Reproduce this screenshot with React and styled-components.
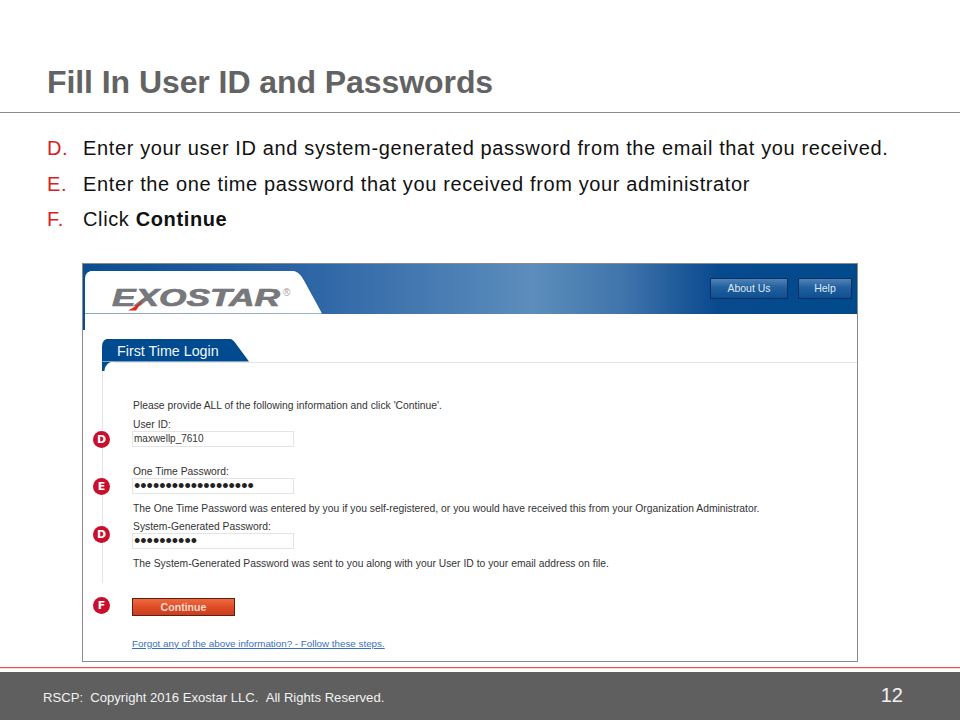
import styled, { createGlobalStyle } from 'styled-components';

const GlobalStyle = createGlobalStyle`
  html, body { margin: 0; padding: 0; background: #fff; }
  body { font-family: "Liberation Sans", Arial, sans-serif; }
`;

const steps = [
  { letter: 'D.', text: 'Enter your user ID and system-generated password from the email that you received.' },
  { letter: 'E.', text: 'Enter the one time password that you received from your administrator' },
  { letter: 'F.', text: <>Click <b>Continue</b></> },
];

const App = () => (
  <Slide>
    <GlobalStyle />
    <Header><Title>Fill In User ID and Passwords</Title></Header>
    <Steps>
      {steps.map((s) => (
        <Step key={s.letter}>
          <StepLetter>{s.letter}</StepLetter>
          <span>{s.text}</span>
        </Step>
      ))}
    </Steps>

    <Shot>
      <Band>
        <LogoTab>
          <Logo>EXOSTAR</Logo>
          <Swoosh width="16" height="12" viewBox="0 0 16 12">
            <path d="M0 11.5 Q8 8 15.5 0 L8 11.5 Z" fill="#e2231a" />
          </Swoosh>
          <Registered>®</Registered>
        </LogoTab>
        <Nav>
          <NavButton $w={78}>About Us</NavButton>
          <NavButton $w={54}>Help</NavButton>
        </Nav>
      </Band>
      <Strip />
      <TabRow><Tab>First Time Login</Tab></TabRow>
      <Fields>
        <Line>Please provide ALL of the following information and click 'Continue'.</Line>
        <Line $top={7}>User ID:</Line>
        <InputBox>
          <Badge $top={-1}>D</Badge>
          maxwellp_7610
        </InputBox>
        <Line $top={18}>One Time Password:</Line>
        <InputBox>
          <Badge $top={-1}>E</Badge>
          <Dots>{'•'.repeat(19)}</Dots>
        </InputBox>
        <Line $top={8}>The One Time Password was entered by you if you self-registered, or you would have received this from your Organization Administrator.</Line>
        <Line $top={6}>System-Generated Password:</Line>
        <InputBox>
          <Badge $top={-8}>D</Badge>
          <Dots>{'•'.repeat(10)}</Dots>
        </InputBox>
        <Line $top={8}>The System-Generated Password was sent to you along with your User ID to your email address on file.</Line>
      </Fields>
      <Actions>
        <ContinueButton>
          <Badge $top={-2}>F</Badge>
          Continue
        </ContinueButton>
        <HelpLink>Forgot any of the above information? - Follow these steps.</HelpLink>
      </Actions>
    </Shot>

    <Footer>
      <RedRule />
      <FooterBar>
        <Copyright>RSCP:&nbsp;&nbsp;Copyright 2016 Exostar LLC.&nbsp;&nbsp;All Rights Reserved.</Copyright>
        <PageNumber>12</PageNumber>
      </FooterBar>
    </Footer>
  </Slide>
);

const Slide = styled.div`
  width: 960px;
  height: 720px;
  display: flex;
  flex-direction: column;
  overflow: hidden;
  background: #fff;
`;
const Header = styled.div`
  height: 112px;
  box-sizing: content-box;
  border-bottom: 1px solid #8a8a8a;
  display: flex;
  align-items: flex-end;
  padding-left: 47px;
`;
const Title = styled.h1`
  margin: 0 0 13px;
  font-size: 32px;
  line-height: 34px;
  font-weight: 700;
  letter-spacing: -0.07px;
  color: #636363;
`;
const Steps = styled.div`
  padding: 18px 0 0 47px;
`;
const Step = styled.div`
  display: flex;
  height: 35.5px;
  line-height: 35.5px;
  font-size: 20px;
  letter-spacing: 0.63px;
  color: #111;
`;
const StepLetter = styled.span`
  width: 36px;
  color: #d8201f;
`;
const Shot = styled.div`
  width: 774px;
  margin: 25px 0 0 82px;
  border: 1px solid #8a8a8a;
  background: #fff;
`;
const Band = styled.div`
  height: 50px;
  display: flex;
  justify-content: space-between;
  align-items: flex-end;
  background: linear-gradient(90deg, #0a4d90 0%, #2e66a6 30%, #5c8dbc 58%, #3f74ab 70%, #08498e 82%, #004a8c 100%);
`;
const LogoTab = styled.div`
  position: relative;
  width: 237px;
  height: 43px;
  margin-left: 2px;
  background: #fff;
  clip-path: path('M0 43 V8 Q0 0 10 0 H206 Q214 0 219 10 L237 43 Z');
`;
const Logo = styled.div`
  position: absolute;
  left: 27px;
  top: 13px;
  font-size: 24px;
  line-height: 28px;
  font-weight: 700;
  font-style: italic;
  color: #77787b;
  -webkit-text-stroke: 0.7px #77787b;
  transform: scaleX(1.47);
  transform-origin: left center;
`;
const Swoosh = styled.svg`
  position: absolute;
  left: 43px;
  top: 28px;
`;
const Registered = styled.span`
  position: absolute;
  left: 198px;
  top: 17px;
  font-size: 10px;
  line-height: 10px;
  color: #a0a0a0;
`;
const Nav = styled.div`
  align-self: flex-start;
  display: flex;
  gap: 10px;
  padding: 14px 5px 0 0;
`;
const NavButton = styled.div`
  width: ${(p) => p.$w}px;
  height: 21px;
  box-sizing: border-box;
  border: 1px solid #0a2f66;
  background: linear-gradient(180deg, #4f83b6 0%, #22609f 45%, #0f4f90 100%);
  color: #dfe9f4;
  font-size: 10.5px;
  line-height: 19px;
  text-align: center;
`;
const Strip = styled.div`
  width: 2px;
  height: 16px;
  background: #0a4d90;
`;
const TabRow = styled.div`
  margin: 9px 0 0 19px;
`;
const Tab = styled.div`
  width: 147px;
  height: 23px;
  padding-left: 15px;
  box-sizing: border-box;
  background: #004a8f;
  color: #f2f6fa;
  font-size: 14.3px;
  line-height: 24px;
  clip-path: path('M0 23 V8 Q0 0 8 0 H126 Q130 0 133 4 L147 23 Z');
`;
const Fields = styled.div`
  position: relative;
  margin-left: 19px;
  padding: 36px 0 14px 30px;
  border-top: 1px solid #e4e4e4;
  border-left: 1px solid #e4e4e4;
  &::before {
    content: '';
    position: absolute;
    left: -1px;
    top: -1px;
    width: 12px;
    height: 9px;
    background: radial-gradient(circle at 12px 9px, #fff 9px, #004a8f 10px);
  }
`;
const Line = styled.div`
  height: 12px;
  margin-top: ${(p) => p.$top || 0}px;
  font-size: 10.3px;
  line-height: 14px;
  letter-spacing: 0.02px;
  color: #333;
  white-space: nowrap;
`;
const InputBox = styled.div`
  position: relative;
  width: 162px;
  height: 16px;
  box-sizing: border-box;
  margin: 1px 0 0 -1px;
  padding-left: 1px;
  border: 1px solid #e4e4e4;
  font-size: 10px;
  line-height: 14px;
  color: #333;
`;
const Dots = styled.span`
  font-size: 18px;
  color: #222;
  line-height: 14px;
`;
const Badge = styled.span`
  position: absolute;
  left: -40px;
  top: ${(p) => p.$top}px;
  width: 17px;
  height: 17px;
  border-radius: 50%;
  background: #c8102e;
  color: #fff;
  font-family: "DejaVu Sans", sans-serif;
  font-size: 11px;
  font-weight: 700;
  line-height: 17px;
  text-align: center;
`;
const Actions = styled.div`
  padding: 15px 0 11px 49px;
`;
const ContinueButton = styled.div`
  position: relative;
  width: 103px;
  height: 18px;
  box-sizing: border-box;
  border: 1px solid #5c1f12;
  background: linear-gradient(180deg, #ee6a3e 0%, #dd4a26 55%, #c93f20 100%);
  color: #f7dcd0;
  font-size: 10.6px;
  font-weight: 700;
  line-height: 17px;
  text-align: center;
`;
const HelpLink = styled.div`
  margin-top: 22px;
  font-size: 9.8px;
  line-height: 12px;
  color: #3a6fc0;
  text-decoration: underline;
`;
const Footer = styled.div`
  margin-top: auto;
`;
const RedRule = styled.div`
  height: 1px;
  margin-bottom: 4px;
  background: #e2504f;
  box-shadow: 0 1px 1px #f8d8d0;
`;
const FooterBar = styled.div`
  height: 48px;
  background: #5f5f5f;
  color: #f2f2f2;
  display: flex;
  justify-content: space-between;
  padding: 0 57px 0 43px;
`;
const Copyright = styled.div`
  font-size: 13.1px;
  line-height: 51px;
`;
const PageNumber = styled.div`
  font-size: 20px;
  line-height: 46px;
`;

export default App;
